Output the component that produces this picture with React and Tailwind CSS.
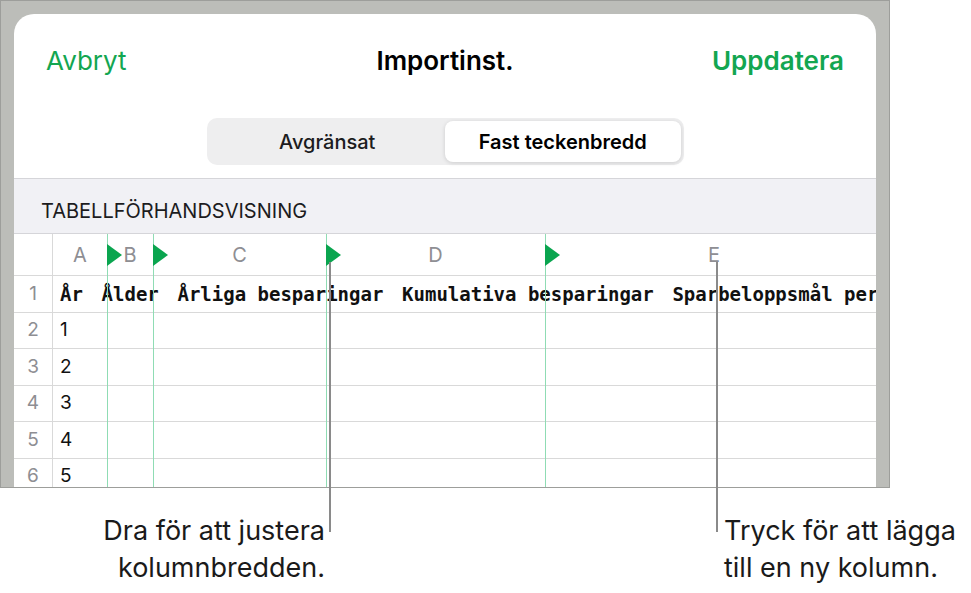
import React from 'react';

const COLS = [
  { key: 'A', w: 54 },
  { key: 'B', w: 46 },
  { key: 'C', w: 173 },
  { key: 'D', w: 219 },
  { key: 'E', w: 338 },
];

const HEAD = ['År', 'Ålder', 'Årliga besparingar', 'Kumulativa besparingar', 'Sparbeloppsmål per år'];

// green markers, x relative to card
const MARKERS = [93, 139, 312, 531];

function Marker({ left }) {
  return (
    <>
      <div className="absolute top-0 bottom-0 w-px bg-[#8fdcb4]" style={{ left }} />
      <svg className="absolute top-[10px]" style={{ left }} width="15" height="22" viewBox="0 0 15 22">
        <path d="M0 0 L15 11 L0 22 Z" fill="#0aa54f" />
      </svg>
    </>
  );
}

function Row({ num, children, first }) {
  return (
    <div className="flex h-[36.5px] border-b border-[#d9d9d9]">
      <div className="flex w-[39px] shrink-0 items-center justify-center border-r border-[#d9d9d9] text-[19px] text-[#8e8e93]">
        {num}
      </div>
      <div className={`flex min-w-0 items-center pl-[7px] ${first ? '' : 'text-[19px] text-[#111]'}`}>{children}</div>
    </div>
  );
}

export default function App() {
  return (
    <div className="relative h-[593px] w-[971px] overflow-hidden bg-white font-['Inter','Noto_Sans',sans-serif]">
      <div className="h-[488px] w-[890px] border border-[#9d9e9b] bg-[#bcbdb9] px-[13px] pt-[13px]">
        <div className="flex h-full flex-col overflow-hidden rounded-t-[20px] bg-white">
          <div className="grid h-[92px] shrink-0 grid-cols-3 items-center px-[32px] text-[26px]">
            <span className="justify-self-start text-[#13a651]">Avbryt</span>
            <span className="justify-self-center font-semibold text-black">Importinst.</span>
            <span className="justify-self-end font-semibold text-[#13a651]">Uppdatera</span>
          </div>

          <div className="mx-auto mt-[12px] mb-[13px] flex h-[47px] w-[477px] shrink-0 rounded-[10px] bg-[#eeeeef] p-[3px]">
            <div className="flex flex-1 items-center justify-center text-[20px] font-medium text-[#1c1c1e]">Avgränsat</div>
            <div className="flex flex-1 items-center justify-center rounded-[8px] bg-white text-[20px] font-semibold text-black shadow-[0_1px_4px_rgba(0,0,0,0.14)]">
              Fast teckenbredd
            </div>
          </div>

          <div className="flex h-[56px] shrink-0 items-center border-y border-[#d5d5d9] bg-[#f1f1f5] pt-[9px] pl-[27px] text-[20px] text-[#1c1c1e]">
            TABELLFÖRHANDSVISNING
          </div>

          <div className="relative min-h-0 flex-1 overflow-hidden">
            <div className="flex h-[42px] border-b border-[#d9d9d9]">
              <div className="w-[39px] shrink-0 border-r border-[#d9d9d9]" />
              {COLS.map((c) => (
                <div key={c.key} className="flex shrink-0 items-center justify-center text-[20px] text-[#8e8e93]" style={{ width: c.w }}>
                  {c.key}
                </div>
              ))}
            </div>
            <Row num="1" first>
              <div className="flex gap-[18.7px] whitespace-nowrap font-['DejaVu_Sans_Mono',monospace] text-[19px] font-bold text-[#111]">
                {HEAD.map((h) => (
                  <span key={h}>{h}</span>
                ))}
              </div>
            </Row>
            {[1, 2, 3, 4, 5].map((n) => (
              <Row key={n} num={n + 1}>
                {n}
              </Row>
            ))}
            {MARKERS.map((x) => (
              <Marker key={x} left={x} />
            ))}
          </div>
        </div>
      </div>

      {/* callout lines */}
      <div className="absolute left-[329px] top-[262px] h-[270px] w-[2px] bg-[#8a8a8a]" />
      <div className="absolute left-[716px] top-[262px] h-[270px] w-[2px] bg-[#8a8a8a]" />

      <div className="mt-[24px] flex text-[27px] leading-[37px] text-[#1a1a1a]">
        <div className="w-[325px] text-right">
          <div>Dra för att justera</div>
          <div>kolumnbredden.</div>
        </div>
        <div className="ml-[399px] whitespace-nowrap">
          <div>Tryck för att lägga</div>
          <div>till en ny kolumn.</div>
        </div>
      </div>
    </div>
  );
}
